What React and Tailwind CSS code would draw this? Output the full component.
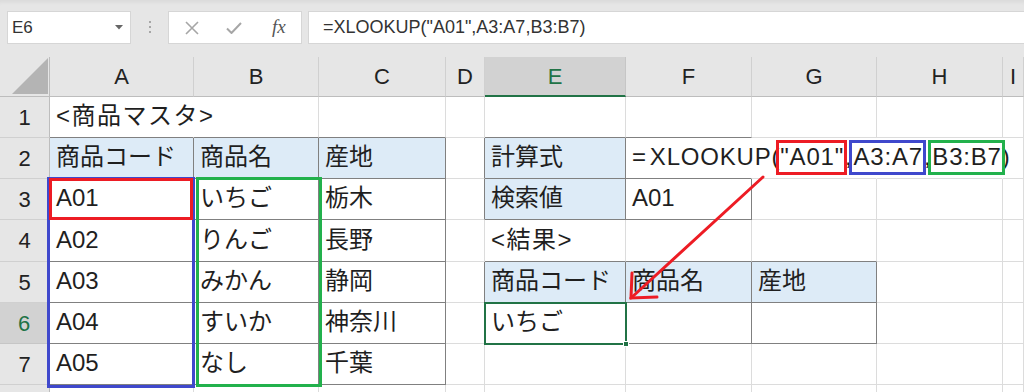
import React from "react";

const cols = ["A", "B", "C", "D", "E", "F", "G", "H", "I"];
const rowNums = [1, 2, 3, 4, 5, 6, 7, 8];

// セルの値
const values = {
  A1: "<商品マスタ>",
  A2: "商品コード",
  B2: "商品名",
  C2: "産地",
  A3: "A01",
  B3: "いちご",
  C3: "栃木",
  A4: "A02",
  B4: "りんご",
  C4: "長野",
  A5: "A03",
  B5: "みかん",
  C5: "静岡",
  A6: "A04",
  B6: "すいか",
  C6: "神奈川",
  A7: "A05",
  B7: "なし",
  C7: "千葉",
  E2: "計算式",
  E3: "検索値",
  F3: "A01",
  E4: "<結果>",
  E5: "商品コード",
  F5: "商品名",
  G5: "産地",
  E6: "いちご",
};

const blueCells = new Set(["A2", "B2", "C2", "E2", "E3", "E5", "F5", "G5"]);
// 文字がはみ出すセルは右の罫線を消す
const noRight = new Set(["A1", "F2", "G2", "H2"]);

const gridCols =
  "grid grid-cols-[50px_144px_125px_127px_39px_141px_126px_125px_126px_1fr] grid-rows-[40px_41px_41px_41px_42px_41px_41px_41px_41px]";

function inTable(c, r) {
  const ci = cols.indexOf(c);
  if (ci < 0) return false;
  if (ci <= 2 && r >= 2 && r <= 7) return true; // A2:C7
  if (ci >= 4 && ci <= 5 && r >= 2 && r <= 3) return true; // E2:F3
  if (ci >= 4 && ci <= 6 && r >= 5 && r <= 6) return true; // E5:G6
  return false;
}

function classNames(...classes) {
  return classes.filter(Boolean).join(" ");
}

function Boxed({ color, children }) {
  return (
    <span className="relative flex items-center">
      {children}
      <span
        className={classNames(
          "pointer-events-none absolute -left-[4px] -right-[3px] top-[2px] bottom-[1px] border-[3px]",
          color
        )}
      />
    </span>
  );
}

function FormulaCell() {
  return (
    <div className="flex h-full items-stretch whitespace-nowrap tracking-[0.8px]">
      <span className="flex items-center">
        <span className="mr-[3px]">=</span>XLOOKUP(
      </span>
      <Boxed color="border-[#ed1c24]">"A01"</Boxed>
      <span className="flex items-center px-[1px]">,</span>
      <Boxed color="border-[#3f48cc]">A3:A7</Boxed>
      <span className="flex items-center px-[1px]">,</span>
      <Boxed color="border-[#22b14c]">B3:B7</Boxed>
      <span className="flex items-center">)</span>
    </div>
  );
}

function Cell({ c, r }) {
  const key = `${c}${r}`;
  const ci = cols.indexOf(c);
  const rightCol = cols[ci + 1];
  const darkRight = inTable(c, r) || (rightCol && inTable(rightCol, r));
  const darkBottom = inTable(c, r) || inTable(c, r + 1);

  let rightCls = darkRight ? "border-r-[#808080]" : "border-r-[#dcdcdc]";
  if (noRight.has(key)) rightCls = "border-r-transparent";
  const bottomCls = darkBottom ? "border-b-[#808080]" : "border-b-[#dcdcdc]";

  return (
    <div
      className={classNames(
        "flex items-center overflow-visible whitespace-nowrap border-r border-b pl-[6px] pb-[2px] text-[24px] text-[#1f1f1f]",
        rightCls,
        bottomCls,
        blueCells.has(key) ? "bg-[#ddebf7]" : "",
        key === "A1" || key === "E4" ? "tracking-[1.5px]" : ""
      )}
    >
      {key === "F2" ? <FormulaCell /> : values[key]}
    </div>
  );
}

function Toolbar() {
  return (
    <div className="flex h-[57px] items-start bg-[#e6e6e6] pt-[11px] shadow-[inset_0_5px_4px_-3px_rgba(0,0,0,0.06)]">
      <div className="ml-[7px] flex h-[33px] w-[124px] items-center justify-between border border-[#d6d6d6] bg-white pl-[4px] pr-[7px]">
        <span className="text-[17px] text-[#333]">E6</span>
        <svg width="8" height="5" viewBox="0 0 8 5">
          <polygon points="0,0 8,0 4,4.5" fill="#666" />
        </svg>
      </div>
      <div className="ml-[18px] mt-[10px] flex flex-col gap-[3px]">
        <span className="h-[2px] w-[2px] bg-[#a6a6a6]" />
        <span className="h-[2px] w-[2px] bg-[#a6a6a6]" />
        <span className="h-[2px] w-[2px] bg-[#a6a6a6]" />
      </div>
      <div className="ml-[17px] flex h-[33px] w-[134px] items-center border border-[#d6d6d6] bg-white">
        <svg className="ml-[16px]" width="14" height="14" viewBox="0 0 14 14">
          <path d="M1 1L13 13M13 1L1 13" stroke="#a6a6a6" strokeWidth="1.6" />
        </svg>
        <svg className="ml-[27px]" width="16" height="12" viewBox="0 0 16 12">
          <path d="M1 6.5L5.5 11L15 1" stroke="#a6a6a6" strokeWidth="2" fill="none" />
        </svg>
        <span className="ml-[30px] font-['Liberation_Serif',serif] text-[19px] italic text-[#555]">
          fx
        </span>
      </div>
      <div className="ml-[6px] flex h-[33px] flex-1 items-center border border-r-0 border-[#d6d6d6] bg-white pl-[14px] text-[18px] text-[#333]">
        =XLOOKUP("A01",A3:A7,B3:B7)
      </div>
    </div>
  );
}

export default function App() {
  return (
    <div className="relative h-[392px] w-[1024px] overflow-hidden bg-white font-['Liberation_Sans','Noto_Sans_CJK_JP',sans-serif]">
      <Toolbar />

      <div className="grid h-[335px] overflow-hidden">
        {/* シート本体 */}
        <div className={classNames(gridCols, "[grid-area:1/1] bg-white")}>
          {/* 左上の角 */}
          <div className="flex items-end justify-end border-r border-b border-[#bdbdbd] bg-[#e6e6e6] pb-[2px] pr-[1px]">
            <svg width="36" height="36" viewBox="0 0 36 36">
              <polygon points="36,0 36,36 0,36" fill="#b4b4b4" />
            </svg>
          </div>

          {/* 列見出し */}
          {cols.map((c) =>
            c === "E" ? (
              <div
                key={c}
                className="flex items-center justify-center border-r border-r-[#c6c6c6] border-b-2 border-b-[#217346] bg-[#d2d2d2] text-[22px] text-[#217346]"
              >
                {c}
              </div>
            ) : (
              <div
                key={c}
                className="flex items-center justify-center border-r border-b border-r-[#d0d0d0] border-b-[#bdbdbd] bg-[#e6e6e6] text-[22px] text-[#222]"
              >
                {c}
              </div>
            )
          )}

          {/* 行 */}
          {rowNums.map((r) => (
            <React.Fragment key={r}>
              {r === 6 ? (
                <div className="flex items-center justify-center border-r-2 border-b border-r-[#217346] border-b-[#c6c6c6] bg-[#d2d2d2] text-[22px] text-[#217346]">
                  {r}
                </div>
              ) : (
                <div className="flex items-center justify-center border-r border-b border-r-[#bdbdbd] border-b-[#d0d0d0] bg-[#e6e6e6] text-[22px] text-[#222]">
                  {/* 8行目は画面の下で切れて見えない */}
                  {r < 8 ? r : null}
                </div>
              )}
              {cols.map((c) => (
                <Cell key={c + r} c={c} r={r} />
              ))}
            </React.Fragment>
          ))}
        </div>

        {/* 注釈の枠（同じグリッドを重ねる） */}
        <div className={classNames(gridCols, "pointer-events-none [grid-area:1/1]")}>
          <div className="col-start-2 row-start-4 row-end-9 -mt-[2px] -mb-[3px] -ml-[3px] -mr-[1px] border-[3px] border-[#3f48cc]" />
          <div className="col-start-3 row-start-4 row-end-9 -mt-[2px] -mb-[2px] ml-[2px] -mr-[3px] border-[3px] border-[#22b14c]" />
          <div className="col-start-2 row-start-4 -mt-[1px] mb-0 -ml-[1px] mr-[1px] border-[3px] border-[#ed1c24]" />

          {/* 選択セル E6 */}
          <div className="relative col-start-6 row-start-7 -m-[1px] border-2 border-[#217346]">
            <span className="absolute -bottom-[4px] -right-[4px] h-[6px] w-[6px] border border-white bg-[#217346]" />
          </div>
        </div>
      </div>

      {/* 赤い矢印 */}
      <svg
        className="pointer-events-none absolute inset-0"
        width="1024"
        height="392"
        viewBox="0 0 1024 392"
      >
        <g stroke="#ed1c24" strokeWidth="3" strokeLinecap="round" fill="none">
          <path d="M763 177L631 298" />
          <path d="M632 273L631 298L657 297" />
        </g>
      </svg>
    </div>
  );
}
